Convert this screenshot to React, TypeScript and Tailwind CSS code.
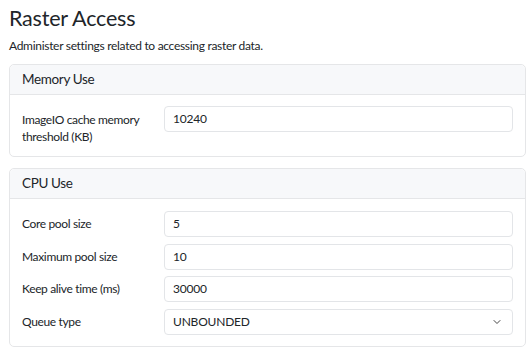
import { ChevronDown } from 'lucide-react';

const font = { fontFamily: 'Lato, "Noto Sans", sans-serif' };

function Field({ label, value, select }: { label: string; value: string; select?: boolean }) {
  return (
    <div className="flex items-start">
      <label className="w-[142px] shrink-0 pr-3 text-[12px] tracking-[-0.35px] leading-[17px] text-[#212529] pt-[4px]">{label}</label>
      <div className="flex-1 h-[26px] rounded-[4px] border border-[#e3e5e8] bg-white flex items-center justify-between pl-[8px] pr-[9px] text-[12px] tracking-[-0.2px] text-[#212529]">
        <span>{value}</span>
        {select && <ChevronDown size={12} strokeWidth={2} className="text-[#444]" />}
      </div>
    </div>
  );
}

export default function App() {
  return (
    <div style={font} className="bg-white w-[531px] h-[347px] overflow-hidden pl-[9px] pr-[5px] pt-[3px]">
      <h1 className="text-[21.5px] tracking-[-0.2px] leading-[30px] text-[#212529]">Raster Access</h1>
      <p className="mt-[5px] text-[12px] tracking-[-0.3px] leading-[16px] text-[#212529]">Administer settings related to accessing raster data.</p>

      <div className="mt-[10px] rounded-[5px] border border-[#e5e6e8]">
        <div className="h-[30px] flex items-center px-3 bg-[#f7f8fa] border-b border-[#e5e6e8] rounded-t-[5px] text-[13.5px] tracking-[-0.35px] text-[#212529]">Memory Use</div>
        <div className="px-3 pt-[11px] pb-[11px]">
          <div className="flex items-start">
            <label className="w-[142px] shrink-0 pr-3 text-[12px] tracking-[-0.35px] leading-[17px] text-[#212529] pt-[5px]">ImageIO cache memory threshold (KB)</label>
            <div className="flex-1 h-[26px] rounded-[4px] border border-[#e3e5e8] bg-white flex items-center pl-[8px] text-[12px] tracking-[-0.2px] text-[#212529]">10240</div>
          </div>
        </div>
      </div>

      <div className="mt-[11px] rounded-[5px] border border-[#e5e6e8]">
        <div className="h-[30px] flex items-center px-3 bg-[#f7f8fa] border-b border-[#e5e6e8] rounded-t-[5px] text-[13.5px] tracking-[-0.35px] text-[#212529]">CPU Use</div>
        <div className="px-3 pt-[12px] pb-[11px] flex flex-col gap-[6.5px]">
          <Field label="Core pool size" value="5" />
          <Field label="Maximum pool size" value="10" />
          <Field label="Keep alive time (ms)" value="30000" />
          <Field label="Queue type" value="UNBOUNDED" select />
        </div>
      </div>
    </div>
  );
}
